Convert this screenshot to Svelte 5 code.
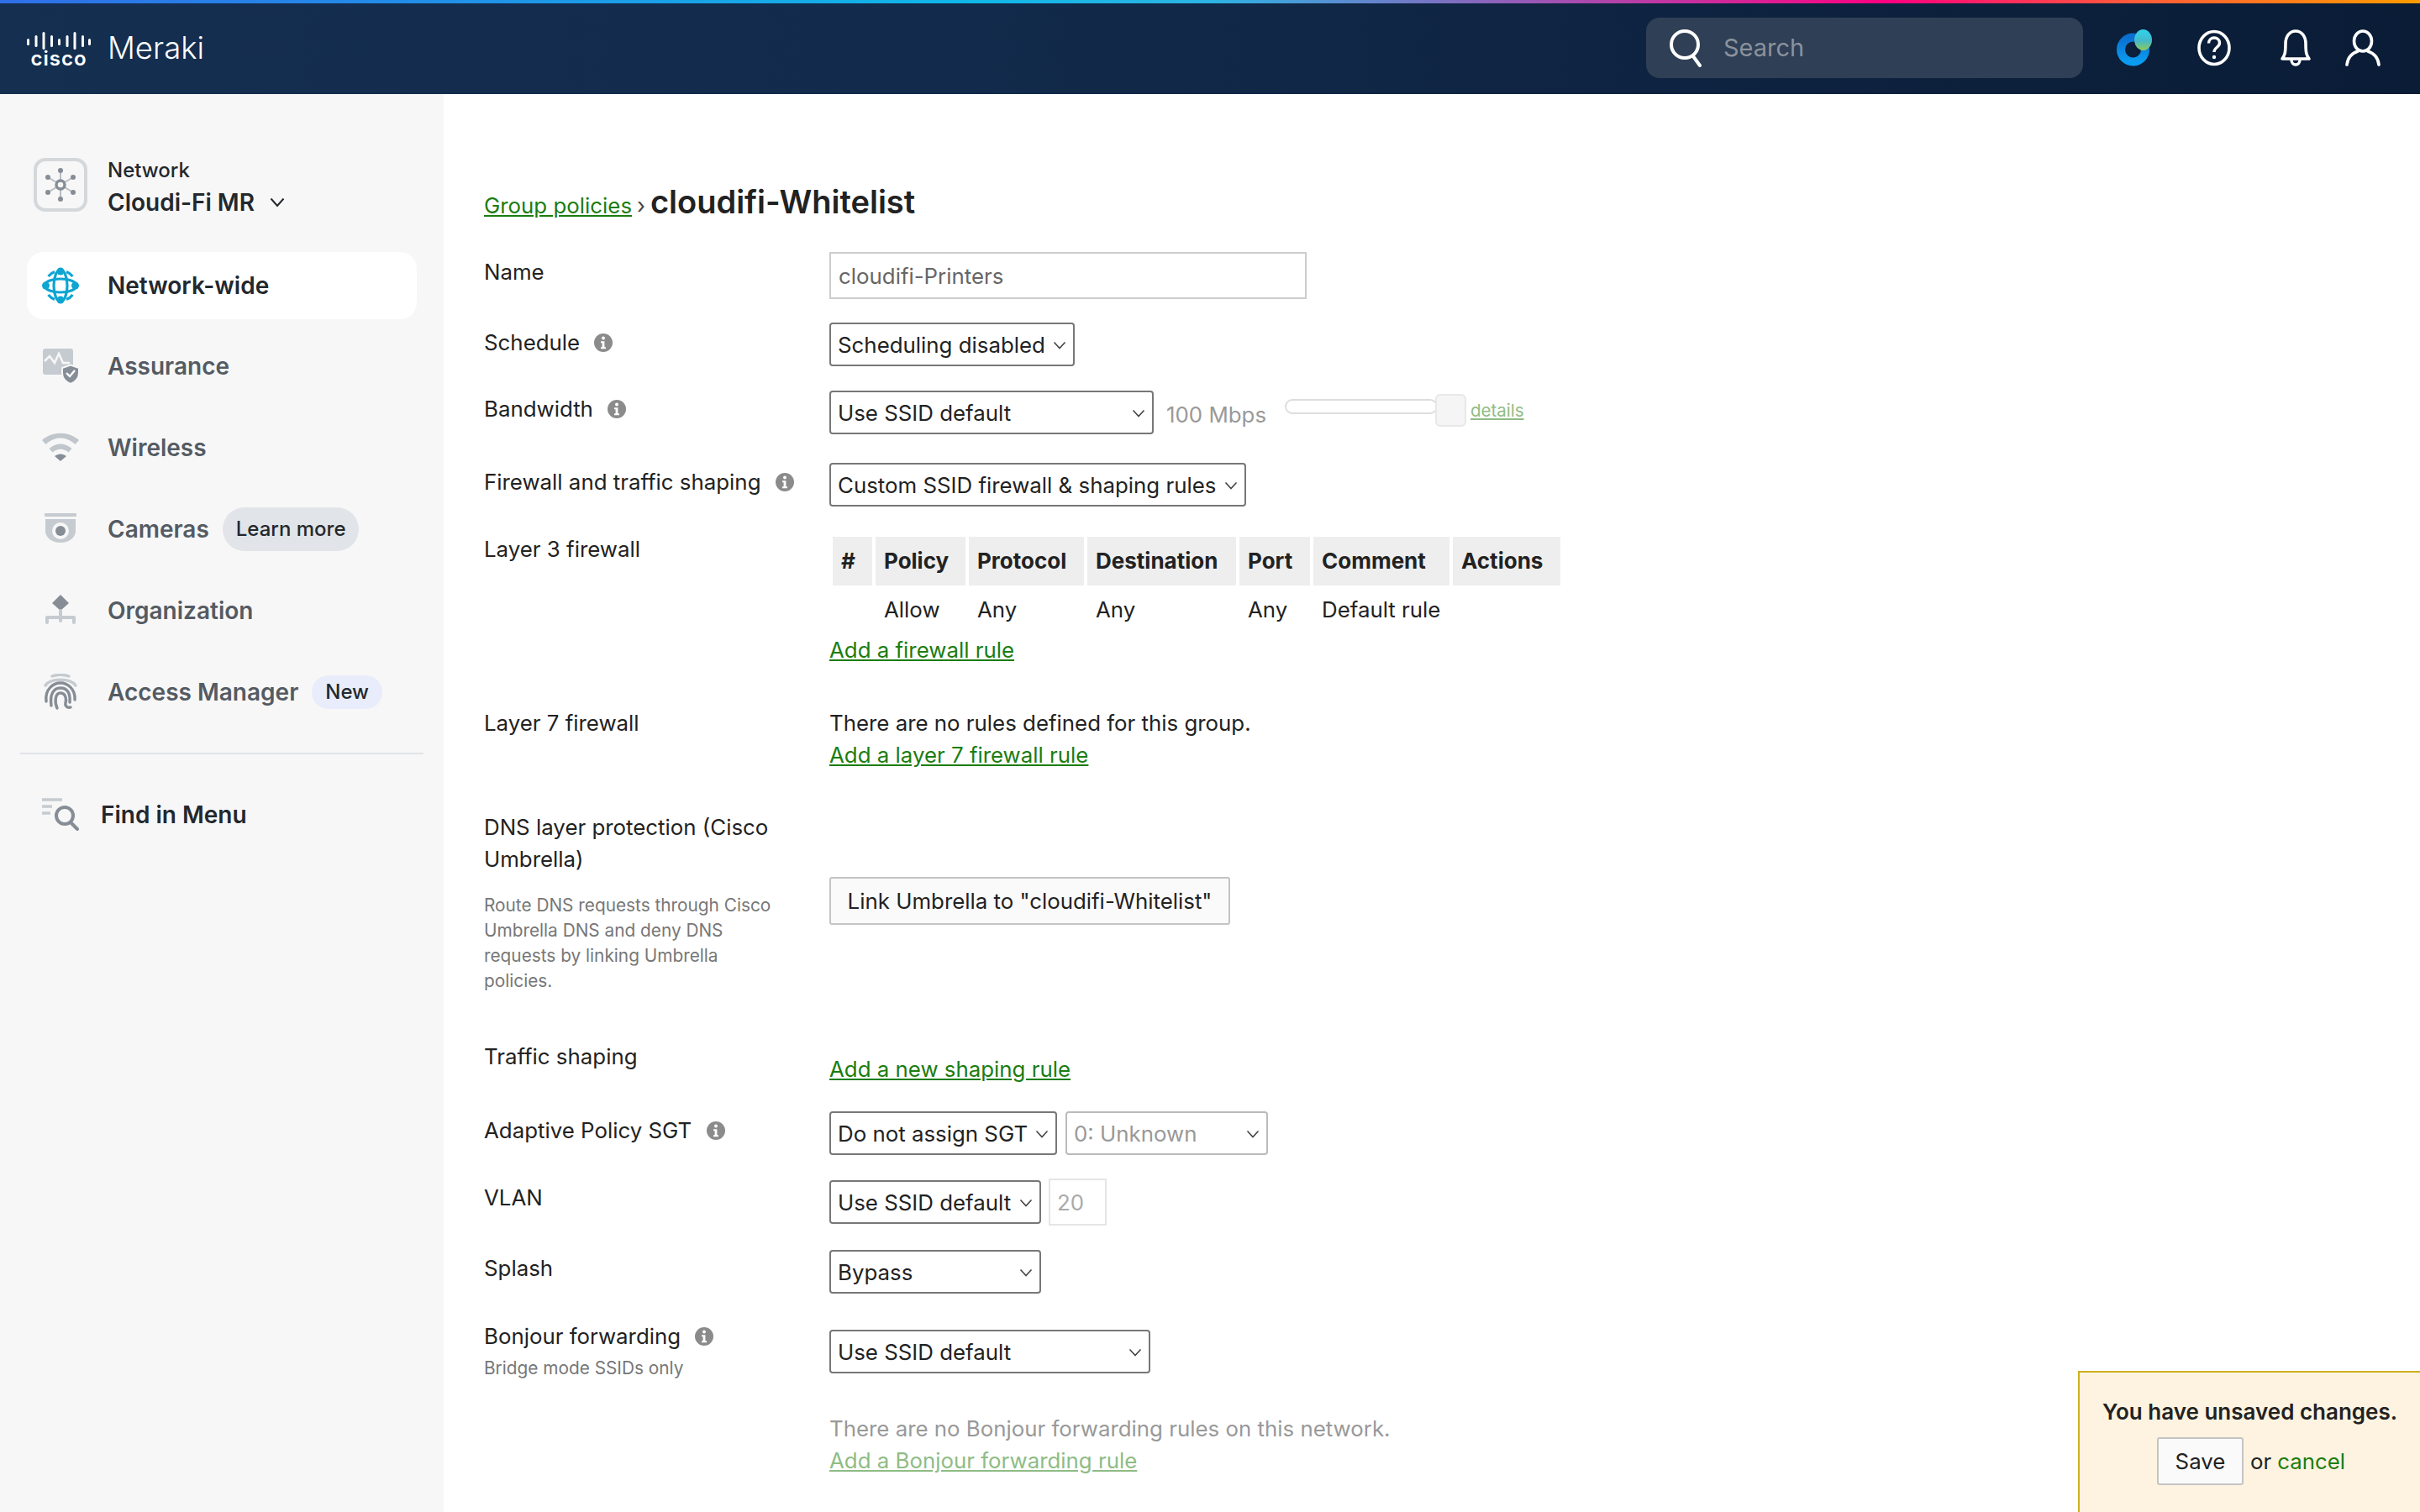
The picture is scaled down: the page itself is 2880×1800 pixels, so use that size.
<script lang="ts">
    const navItems = [
        { key: "assurance", label: "Assurance" },
        { key: "wireless", label: "Wireless" },
        { key: "cameras", label: "Cameras", pill: "Learn more" },
        { key: "organization", label: "Organization" },
        { key: "access", label: "Access Manager", pill: "New" },
    ];

    const columns = ["#", "Policy", "Protocol", "Destination", "Port", "Comment", "Actions"];
    const ruleRow = ["", "Allow", "Any", "Any", "Any", "Default rule", ""];
</script>

{#snippet info()}
    <svg class="info" viewBox="0 0 22 22" aria-hidden="true">
        <circle cx="11" cy="11" r="11" fill="#8b8b8b" />
        <circle cx="11" cy="5.5" r="2" fill="#fff" />
        <path d="M8 9.2h4.4v7h1.6v2H8v-2h1.6v-5H8z" fill="#fff" />
    </svg>
{/snippet}

{#snippet chevron()}
    <svg class="chev" viewBox="0 0 16 10" aria-hidden="true">
        <path d="M1.5 1.5 8 8.5l6.5-7" fill="none" stroke="currentColor" stroke-width="1.6" />
    </svg>
{/snippet}

{#snippet select(text: string, cls: string)}
    <div class="select {cls}"><span>{text}</span>{@render chevron()}</div>
{/snippet}

<div class="page">
    <header class="topbar">
        <div class="brand">
            <div class="cisco">
                <svg viewBox="0 0 76 22" width="76" height="22" aria-hidden="true">
                    <g fill="#fff">
                        <rect x="0" y="8" width="3" height="8" rx="1.5" />
                        <rect x="9.5" y="4" width="3" height="14" rx="1.5" />
                        <rect x="18.5" y="0" width="3" height="21" rx="1.5" />
                        <rect x="28" y="4" width="3" height="14" rx="1.5" />
                        <rect x="37" y="8" width="3" height="8" rx="1.5" />
                        <rect x="46.5" y="4" width="3" height="14" rx="1.5" />
                        <rect x="55.5" y="0" width="3" height="21" rx="1.5" />
                        <rect x="65" y="4" width="3" height="14" rx="1.5" />
                        <rect x="73" y="8" width="3" height="8" rx="1.5" />
                    </g>
                </svg>
                <span class="cisco-word">cisco</span>
            </div>
            <span class="meraki">Meraki</span>
        </div>
        <div class="top-right">
            <div class="search">
                <svg class="search-icon" viewBox="0 0 42 46" aria-hidden="true">
                    <circle cx="19" cy="19" r="16" fill="none" stroke="#fff" stroke-width="4" />
                    <path d="M29 33l8 11" stroke="#fff" stroke-width="4" stroke-linecap="round" />
                </svg>
                <span>Search</span>
            </div>
            <svg class="webex" viewBox="0 0 42 44" aria-hidden="true">
                <defs>
                    <linearGradient id="swirl" x1="0" y1="0" x2="0" y2="1">
                        <stop offset="0" stop-color="#0a6fd0" />
                        <stop offset="1" stop-color="#0a9cf0" />
                    </linearGradient>
                    <linearGradient id="petal" x1="0" y1="0" x2="0" y2="1">
                        <stop offset="0" stop-color="#2fd3ee" />
                        <stop offset="0.55" stop-color="#45b8c8" />
                        <stop offset="1" stop-color="#8fcb5a" />
                    </linearGradient>
                </defs>
                <circle cx="19.500" cy="24" r="14.500" fill="none" stroke="url(#swirl)" stroke-width="10" />
                <ellipse cx="31.500" cy="12.500" rx="10.500" ry="12.500" fill="url(#petal)" />
            </svg>
            <svg class="help" viewBox="0 0 40 44" aria-hidden="true">
                <ellipse cx="20" cy="22" rx="18" ry="19.5" fill="none" stroke="#fff" stroke-width="3.6" />
                <path d="M13.5 16.5c0-8.500 13-8.500 13-.5 0 5.500-6.500 5-6.500 11" fill="none" stroke="#fff" stroke-width="3.4" />
                <circle cx="20" cy="33" r="2.200" fill="#fff" />
            </svg>
            <svg class="bell" viewBox="0 0 38 44" aria-hidden="true">
                <path d="M3 35c3-4 4-7 4-18C7 8 12 2 19 2s12 6 12 15c0 11 1 14 4 18z" fill="none" stroke="#fff" stroke-width="3.6" stroke-linejoin="round" />
                <path d="M14 36c0 8 10 8 10 0" fill="none" stroke="#fff" stroke-width="3.4" />
            </svg>
            <svg class="user" viewBox="0 0 42 44" aria-hidden="true">
                <ellipse cx="21" cy="14" rx="10.500" ry="12" fill="none" stroke="#fff" stroke-width="3.6" />
                <path d="M2 42c1-9 7-14 13-16M40 42c-1-9-7-14-13-16" fill="none" stroke="#fff" stroke-width="3.6" stroke-linecap="round" />
            </svg>
        </div>
    </header>

    <div class="body">
        <aside class="sidebar">
            <div class="network">
                <div class="net-icon">
                    <svg viewBox="0 0 40 40" width="40" height="40" aria-hidden="true">
                        <g stroke="#b9bdc2" stroke-width="2">
                            <path d="M20 2v36M5 11l30 18M35 11L5 29" />
                        </g>
                        <g fill="#868d96">
                            <circle cx="20" cy="3" r="3" />
                            <circle cx="20" cy="37" r="3" />
                            <circle cx="5" cy="11" r="3" />
                            <circle cx="35" cy="11" r="3" />
                            <circle cx="5" cy="29" r="3" />
                            <circle cx="35" cy="29" r="3" />
                        </g>
                        <circle cx="20" cy="20" r="5" fill="#f7f7f7" stroke="#868d96" stroke-width="3.400" />
                    </svg>
                </div>
                <div class="net-text">
                    <div class="net-kicker">Network</div>
                    <div class="net-name">
                        Cloudi-Fi MR
                        <svg viewBox="0 0 18 12" width="18" height="12" aria-hidden="true">
                            <path d="M1.500 1.500 9 10l7.500-8.500" fill="none" stroke="#23282e" stroke-width="2" />
                        </svg>
                    </div>
                </div>
            </div>

            <div class="nav-active">
                <svg class="nav-icon" viewBox="0 0 44 44" aria-hidden="true">
                    <g fill="none" stroke="#0ea5d3" stroke-width="3.200">
                        <ellipse cx="22" cy="22" rx="19" ry="8" />
                        <ellipse cx="22" cy="22" rx="8" ry="19" />
                        <path d="M15 5.500A18 18 0 0 0 7.500 11M29 5.500A18 18 0 0 1 36.500 11M15 38.500A18 18 0 0 1 7.500 33M29 38.500A18 18 0 0 0 36.500 33" />
                    </g>
                    <g fill="#0ea5d3">
                        <ellipse cx="22" cy="5" rx="4.500" ry="4.500" />
                        <ellipse cx="22" cy="39" rx="4.500" ry="4.500" />
                        <ellipse cx="4.500" cy="22" rx="4.500" ry="4.500" />
                        <ellipse cx="39.500" cy="22" rx="4.500" ry="4.500" />
                    </g>
                </svg>
                <span>Network-wide</span>
            </div>

            <nav class="nav">
                {#each navItems as item}
                    <div class="nav-item">
                        {#if item.key === "assurance"}
                            <svg class="nav-icon" viewBox="0 0 44 44" aria-hidden="true">
                                <rect x="1" y="1" width="36" height="31" rx="3" fill="#c5cbd0" />
                                <path d="M3 16l6-6 6 8 5-11 5 11h8" fill="none" stroke="#f7f7f7" stroke-width="2.500" />
                                <path d="M24 24l10-3.500L44 24v6c0 7-5 11-10 13-5-2-10-6-10-13z" fill="#868d96" stroke="#f7f7f7" stroke-width="2" />
                                <path d="M29 30l4 4 6-7" fill="none" stroke="#fff" stroke-width="2.400" />
                            </svg>
                        {:else if item.key === "wireless"}
                            <svg class="nav-icon" viewBox="0 0 44 44" aria-hidden="true">
                                <path d="M0 13C12 2 32 2 44 13l-4.500 5C29 8 15 8 4.500 18z" fill="#c0c6cb" />
                                <path d="M8.500 23c8-7.500 19-7.500 27 0l-4 4.500c-6-5-13-5-19 0z" fill="#c0c6cb" />
                                <path d="M15 32c4.500-3.500 9.500-3.500 14 0l-7 6z" fill="#868d96" />
                            </svg>
                        {:else if item.key === "cameras"}
                            <svg class="nav-icon" viewBox="0 0 44 44" aria-hidden="true">
                                <rect x="3" y="3" width="38" height="4" rx="1" fill="#c5cbd0" />
                                <path d="M4 10h36v14c0 8-8 14-18 14S4 32 4 24z" fill="#c5cbd0" />
                                <circle cx="22" cy="24" r="10" fill="#f7f7f7" />
                                <circle cx="22" cy="24" r="6" fill="#868d96" />
                            </svg>
                        {:else if item.key === "organization"}
                            <svg class="nav-icon" viewBox="0 0 44 44" aria-hidden="true">
                                <path d="M22 3l10 10-10 9-10-9z" fill="#868d96" />
                                <path d="M22 22v12M6 30h32M6 30v6M38 30v6" fill="none" stroke="#c5cbd0" stroke-width="4" stroke-linecap="round" />
                            </svg>
                        {:else}
                            <svg class="nav-icon" viewBox="0 0 44 44" aria-hidden="true">
                                <g fill="none" stroke-linecap="round" stroke-width="3.400">
                                    <path d="M12 3c6-2 14-2 20 0" stroke="#c5cbd0" />
                                    <path d="M4 14C10 5 34 5 40 14" stroke="#c5cbd0" />
                                    <path d="M5 33C3 18 14 11 22 11s18 7 17 20" stroke="#868d96" />
                                    <path d="M11 38c-2-14 3-21 11-21s12 6 11 17" stroke="#868d96" />
                                    <path d="M18 41c-3-6-3-18 4-18s7 9 6 12c-1 4 3 6 6 5" stroke="#868d96" />
                                </g>
                            </svg>
                        {/if}
                        <span>{item.label}</span>
                        {#if item.pill}
                            <span class="pill pill-{item.key}">{item.pill}</span>
                        {/if}
                    </div>
                {/each}
            </nav>

            <div class="divider"></div>

            <div class="find">
                <svg class="find-icon" viewBox="0 0 44 40" aria-hidden="true">
                    <path d="M0 2h24M0 10h12M0 18h10" stroke="#c5cbd0" stroke-width="3.500" />
                    <circle cx="27" cy="21" r="10" fill="none" stroke="#868d96" stroke-width="4" />
                    <path d="M34 29l8 8" stroke="#868d96" stroke-width="4" stroke-linecap="round" />
                </svg>
                <span>Find in Menu</span>
            </div>
        </aside>

        <main class="main">
            <div class="title">
                <a href="#top" class="link">Group policies</a>
                <span class="sep">›</span>
                <h1>cloudifi-Whitelist</h1>
            </div>

            <div class="row r-name">
                <div class="label">Name</div>
                <div class="text-input">cloudifi-Printers</div>
            </div>

            <div class="row r-schedule">
                <div class="label">Schedule {@render info()}</div>
                {@render select("Scheduling disabled", "w-schedule")}
            </div>

            <div class="row r-bandwidth">
                <div class="label">Bandwidth {@render info()}</div>
                <div class="inline">
                    {@render select("Use SSID default", "w-bandwidth")}
                    <span class="mbps">100 Mbps</span>
                    <div class="slider"><div class="track"></div><div class="thumb"></div></div>
                    <a href="#top" class="details">details</a>
                </div>
            </div>

            <div class="row r-firewall">
                <div class="label">Firewall and traffic shaping {@render info()}</div>
                {@render select("Custom SSID firewall & shaping rules", "w-firewall")}
            </div>

            <div class="row r-l3">
                <div class="label">Layer 3 firewall</div>
                <div>
                    <table class="rules">
                        <thead>
                            <tr>
                                {#each columns as col}<th>{col}</th>{/each}
                            </tr>
                        </thead>
                        <tbody>
                            <tr>
                                {#each ruleRow as cell}<td>{cell}</td>{/each}
                            </tr>
                        </tbody>
                    </table>
                    <a href="#top" class="link block">Add a firewall rule</a>
                </div>
            </div>

            <div class="row r-l7">
                <div class="label">Layer 7 firewall</div>
                <div class="stack">
                    <div>There are no rules defined for this group.</div>
                    <a href="#top" class="link block">Add a layer 7 firewall rule</a>
                </div>
            </div>

            <div class="row r-dns">
                <div class="label">
                    <div>DNS layer protection (Cisco Umbrella)</div>
                    <p class="hint">Route DNS requests through Cisco Umbrella DNS and deny DNS requests by linking Umbrella policies.</p>
                </div>
                <div class="button umbrella">Link Umbrella to "cloudifi-Whitelist"</div>
            </div>

            <div class="row r-traffic">
                <div class="label">Traffic shaping</div>
                <a href="#top" class="link shaping">Add a new shaping rule</a>
            </div>

            <div class="row r-sgt">
                <div class="label">Adaptive Policy SGT {@render info()}</div>
                <div class="inline">
                    {@render select("Do not assign SGT", "w-sgt")}
                    {@render select("0: Unknown", "w-unknown disabled")}
                </div>
            </div>

            <div class="row r-vlan">
                <div class="label">VLAN</div>
                <div class="inline">
                    {@render select("Use SSID default", "w-vlan")}
                    <div class="vlan-input">20</div>
                </div>
            </div>

            <div class="row r-splash">
                <div class="label">Splash</div>
                {@render select("Bypass", "w-vlan")}
            </div>

            <div class="row r-bonjour">
                <div class="label">
                    Bonjour forwarding {@render info()}
                    <p class="hint tight">Bridge mode SSIDs only</p>
                </div>
                {@render select("Use SSID default", "w-bonjour")}
            </div>

            <div class="row r-bonjour-rules">
                <div></div>
                <div class="faded">
                    <div>There are no Bonjour forwarding rules on this network.</div>
                    <a href="#top" class="link block">Add a Bonjour forwarding rule</a>
                </div>
            </div>
        </main>
    </div>

    <div class="unsaved">
        <div class="unsaved-title">You have unsaved changes.</div>
        <div class="unsaved-actions">
            <div class="button save">Save</div>
            <span class="or">or</span>
            <a href="#top" class="cancel">cancel</a>
        </div>
    </div>
</div>

<style>
    :global(body) {
        margin: 0;
        background: #fff;
        overflow: hidden;
    }

    .page {
        position: relative;
        width: 2880px;
        height: 1800px;
        overflow: hidden;
        font-family: Inter, "Liberation Sans", sans-serif;
        font-size: 25.85px;
        line-height: 38px;
        color: #222;
    }

    /* top bar */
    .topbar {
        box-sizing: border-box;
        height: 112px;
        padding-bottom: 3px;
        border-top: 4px solid transparent;
        border-image: linear-gradient(90deg, #2f6fe8 0%, #10b8e8 40%, #2cb4e4 50%, #a84cb0 65%, #ff0080 78%, #ff5a3a 88%, #ff9c00 100%) 1;
        background: linear-gradient(90deg, #152f50 0%, #122a4b 40%, #0a1c36 100%);
        display: flex;
        align-items: center;
        justify-content: space-between;
        color: #fff;
    }

    .brand {
        display: flex;
        align-items: center;
        margin-left: 32px;
    }

    .cisco {
        display: flex;
        flex-direction: column;
        align-items: center;
        width: 76px;
        margin-top: 4px;
    }

    .cisco svg {
        display: block;
    }

    .cisco-word {
        font-size: 24px;
        line-height: 20px;
        font-weight: 600;
        letter-spacing: 1px;
    }

    .meraki {
        margin-left: 20px;
        font-size: 36.5px;
        line-height: 46px;
        font-weight: 300;
    }

    .top-right {
        display: flex;
        align-items: center;
    }

    .search {
        width: 520px;
        height: 72px;
        box-sizing: border-box;
        padding-left: 27px;
        border-radius: 16px;
        background: #2f3f55;
        display: flex;
        align-items: center;
        color: #8a929d;
        font-size: 29px;
    }

    .search-icon {
        width: 42px;
        height: 46px;
        margin-right: 23px;
    }

    .webex {
        width: 42px;
        height: 44px;
        margin-left: 40px;
    }

    .help {
        width: 40px;
        height: 44px;
        margin-left: 54px;
    }

    .bell {
        width: 38px;
        height: 44px;
        margin-left: 58px;
    }

    .user {
        width: 42px;
        height: 44px;
        margin-left: 40px;
        margin-right: 47px;
    }

    .body {
        display: flex;
        height: 1688px;
    }

    /* sidebar */
    .sidebar {
        width: 528px;
        flex-shrink: 0;
        box-sizing: border-box;
        padding-top: 76px;
        background: #f7f7f7;
        color: #23282e;
    }

    .network {
        display: flex;
        margin-left: 40px;
        height: 64px;
        align-items: center;
    }

    .net-icon {
        width: 64px;
        height: 64px;
        box-sizing: border-box;
        border: 4px solid #d5d8db;
        border-radius: 14px;
        display: flex;
        align-items: center;
        justify-content: center;
    }

    .net-text {
        margin-left: 24px;
        margin-top: 5px;
    }

    .net-kicker {
        font-size: 24px;
        line-height: 36px;
        font-weight: 500;
    }

    .net-name {
        font-size: 28px;
        line-height: 40px;
        font-weight: 600;
        display: flex;
        align-items: center;
        gap: 18px;
    }

    .nav-active {
        display: flex;
        align-items: center;
        height: 80px;
        margin: 48px 32px 0;
        border-radius: 20px;
        background: #fff;
        font-size: 28px;
        font-weight: 600;
    }

    .nav-active .nav-icon {
        margin-left: 18px;
        margin-right: 34px;
    }

    .nav-icon {
        width: 44px;
        height: 44px;
        flex-shrink: 0;
    }

    .nav {
        margin-top: 7px;
    }

    .nav-item {
        display: flex;
        align-items: center;
        height: 97px;
        margin-left: 50px;
        color: #545b63;
        font-size: 28px;
        font-weight: 600;
    }

    .nav-item .nav-icon {
        margin-right: 34px;
    }

    .pill {
        color: #23282e;
        font-weight: 500;
        font-size: 24px;
    }

    .pill-cameras {
        margin-left: 16px;
        padding: 0 16px;
        line-height: 52px;
        border-radius: 26px;
        background: #e1e4e8;
    }

    .pill-access {
        margin-left: 16px;
        padding: 0 16px;
        line-height: 40px;
        border-radius: 20px;
        background: #e9edfb;
    }

    .divider {
        height: 2px;
        margin: 24px 24px 0;
        background: #e1e4e8;
    }

    .find {
        display: flex;
        align-items: center;
        height: 44px;
        margin: 50px 0 0 50px;
        font-size: 28px;
        font-weight: 600;
    }

    .find-icon {
        width: 44px;
        height: 40px;
        margin-right: 26px;
    }

    /* form */
    .main {
        flex: 1;
        padding-left: 48px;
    }

    .title {
        display: flex;
        align-items: baseline;
        gap: 6px;
        margin-top: 104px;
        height: 48px;
    }

    h1 {
        margin: 0;
        font-size: 38px;
        line-height: 48px;
        font-weight: 600;
        color: #222;
    }

    .sep {
        color: #444;
    }

    .link {
        color: #1b7d10;
        text-decoration: underline;
    }

    .block {
        display: block;
    }

    .row {
        display: grid;
        grid-template-columns: 411px 1fr;
        align-items: start;
    }

    .label {
        padding-top: 3px;
    }

    .info {
        width: 22px;
        height: 22px;
        margin-left: 10px;
        vertical-align: -2px;
    }

    .text-input {
        width: 568px;
        height: 56px;
        box-sizing: border-box;
        padding-left: 9px;
        border: 2px solid #ccc;
        background: #fff;
        color: #666;
        line-height: 54px;
    }

    .select {
        height: 52px;
        box-sizing: border-box;
        padding: 2px 8px 0 8px;
        border: 2px solid #777;
        border-radius: 4px;
        background: #fff;
        display: flex;
        align-items: center;
        justify-content: space-between;
    }

    .select.disabled {
        border-color: #bbb;
        color: #999;
    }

    .chev {
        width: 16px;
        height: 10px;
        color: #444;
        flex-shrink: 0;
    }

    .w-schedule { width: 292px; }
    .w-bandwidth { width: 386px; }
    .w-firewall { width: 496px; }
    .w-sgt { width: 271px; }
    .w-unknown { width: 241px; margin-left: 10px; }
    .w-vlan { width: 252px; }
    .w-bonjour { width: 382px; }

    .inline {
        display: flex;
        align-items: flex-start;
    }

    .mbps {
        margin: 10px 0 0 15px;
        color: #999;
        width: 141px;
    }

    .slider {
        position: relative;
        width: 216px;
        height: 40px;
        margin-top: 4px;
    }

    .track {
        position: absolute;
        left: 0;
        top: 6px;
        width: 182px;
        height: 18px;
        box-sizing: border-box;
        border: 2px solid #ddd;
        border-radius: 9px;
    }

    .thumb {
        position: absolute;
        left: 179px;
        top: 0;
        width: 37px;
        height: 39px;
        box-sizing: border-box;
        border: 2px solid #e8e8e8;
        border-radius: 6px;
        background: #f5f5f5;
    }

    .details {
        margin: 5px 0 0 5px;
        font-size: 20.5px;
        line-height: 38px;
        color: #8fbc85;
        text-decoration: underline;
    }

    .rules {
        margin-top: 2px;
        border-collapse: separate;
        border-spacing: 4px;
        table-layout: fixed;
        width: 874px;
    }

    th {
        height: 58px;
        padding: 0 0 0 10px;
        text-align: left;
        background: #eee;
        font-size: 26px;
        font-weight: 700;
        color: #222;
    }

    td {
        height: 50px;
        padding: 0 0 0 10px;
    }

    th:nth-child(1) { width: 37px; }
    th:nth-child(2) { width: 97px; }
    th:nth-child(3) { width: 127px; }
    th:nth-child(4) { width: 167px; }
    th:nth-child(5) { width: 74px; }
    th:nth-child(6) { width: 152px; }
    th:nth-child(7) { width: 118px; }

    .hint {
        margin: 21px 0 0;
        width: 350px;
        font-size: 20.8px;
        line-height: 30px;
        color: #777;
    }

    .hint.tight {
        margin-top: 4px;
    }

    .button {
        box-sizing: border-box;
        border: 2px solid #c4c4c4;
        border-radius: 3px;
        background: #fafafa;
        text-align: center;
    }

    .umbrella {
        width: 477px;
        height: 57px;
        line-height: 53px;
        margin-top: 81px;
    }

    .shaping {
        margin-top: 18px;
    }

    .vlan-input {
        width: 69px;
        height: 56px;
        box-sizing: border-box;
        margin: -2px 0 0 9px;
        padding-left: 8px;
        border: 2px solid #e5e5e5;
        color: #aaa;
        line-height: 54px;
    }

    .faded {
        color: #999;
    }

    .faded .link {
        color: #8fbc85;
    }

    /* row spacing */
    .r-name { margin-top: 36px; }
    .r-name .label { padding-top: 5px; }
    .r-schedule { margin-top: 28px; }
    .r-schedule .label { padding-top: 5px; }
    .r-bandwidth { margin-top: 29px; }
    .r-firewall { margin-top: 34px; }
    .r-firewall .label { padding-top: 4px; }
    .r-l3 { margin-top: 30px; }
    .r-l3 .label { padding-top: 2px; }
    .r-l3 .rules { margin-top: 2px; }
    .r-l7 { margin-top: 49px; }
    .r-l7 .label { padding-top: 0; }
    .r-dns { margin-top: 45px; }
    .r-traffic { margin-top: 53px; }
    .r-sgt { margin-top: 31px; }
    .r-sgt .label { padding-top: 4px; }
    .r-vlan { margin-top: 30px; }
    .r-vlan .label { padding-top: 2px; }
    .r-splash { margin-top: 29px; }
    .r-bonjour { margin-top: 43px; }
    .r-bonjour .label { padding-top: 0; margin-top: -11px; }
    .r-bonjour-rules { margin-top: 38px; }

    /* unsaved changes box */
    .unsaved {
        position: absolute;
        left: 2473px;
        top: 1632px;
        width: 407px;
        height: 168px;
        box-sizing: border-box;
        border: solid #cdb01d;
        border-width: 2px 0 0 2px;
        background: #fef3e0;
        padding: 28px 0 0 27px;
    }

    .unsaved-title {
        font-size: 26px;
        font-weight: 600;
    }

    .unsaved-actions {
        display: flex;
        align-items: center;
        margin: 11px 0 0 65px;
    }

    .save {
        width: 103px;
        height: 57px;
        line-height: 53px;
    }

    .or {
        margin-left: 8px;
    }

    .cancel {
        margin-left: 7px;
        color: #1b7d10;
        text-decoration: none;
    }
</style>
